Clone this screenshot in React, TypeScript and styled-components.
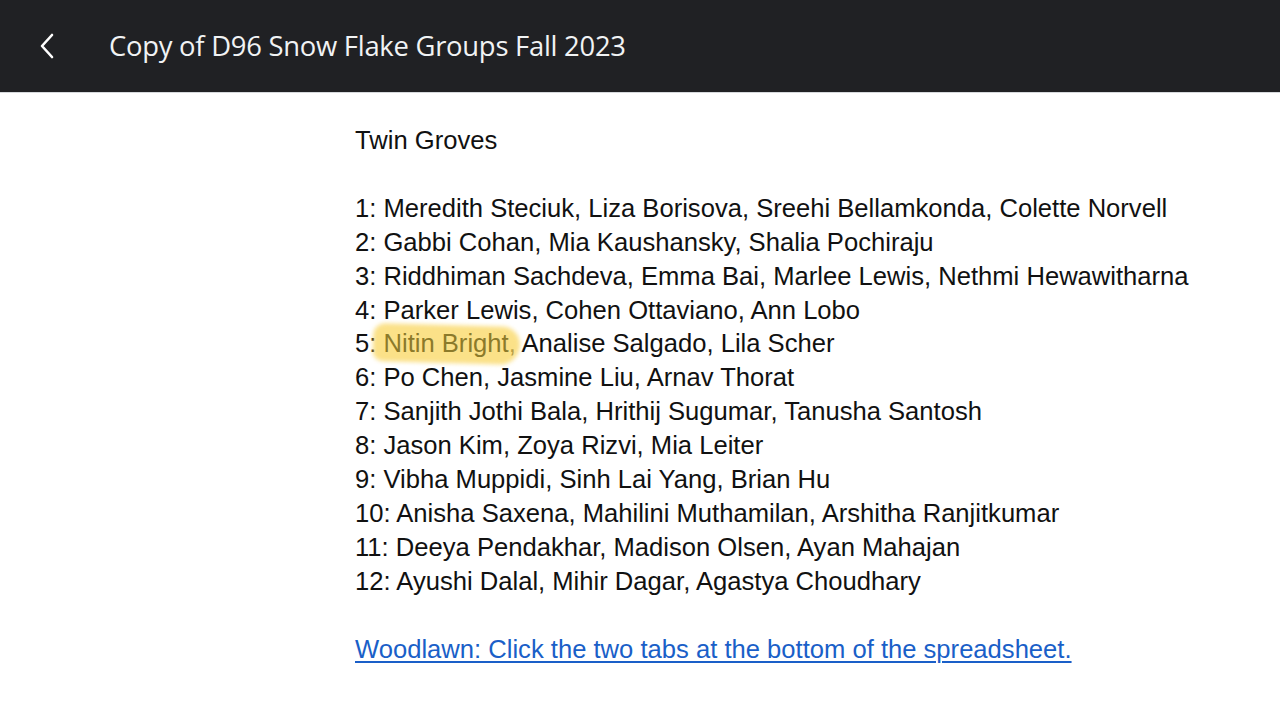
import React from "react";
import styled, { createGlobalStyle } from "styled-components";

const Global = createGlobalStyle`
  html, body { margin: 0; padding: 0; background: #ffffff; }
  body { font-family: "Liberation Sans", Arial, sans-serif; }
`;

const Page = styled.div`
  width: 1280px;
  height: 706px;
  overflow: hidden;
  background: #ffffff;
  display: flex;
  flex-direction: column;
`;

const TopBar = styled.header`
  height: 92px;
  flex: none;
  background: #202124;
  border-bottom: 1px solid #d6d9dc;
  display: flex;
  align-items: center;
  padding-left: 34px;
  gap: 49px;
`;

const BackButton = styled.button`
  width: 26px;
  height: 30px;
  padding: 0;
  border: 0;
  background: transparent;
  display: flex;
  align-items: center;
  justify-content: center;
  color: #ffffff;
`;

const Title = styled.h1`
  margin: 0;
  font-family: "Open Sans", "Noto Sans", sans-serif;
  font-weight: 400;
  font-size: 27.4px;
  letter-spacing: -0.25px;
  color: #f1f3f4;
  padding-bottom: 2px;
`;

const Content = styled.main`
  padding: 31px 0 0 355px;
  font-family: "Liberation Sans", Arial, sans-serif;
  font-size: 25.6px;
  line-height: 33.9px;
  color: #111111;
`;

const Line = styled.div`
  white-space: nowrap;
`;

const Blank = styled.div`
  height: 33.9px;
`;

const HighlightWrap = styled.span`
  position: relative;
  z-index: 0;
`;

const Highlight = styled.span`
  position: relative;
  color: #8c7a2a;
  &::before {
    content: "";
    position: absolute;
    left: -10px;
    right: -12px;
    top: -4px;
    bottom: -6px;
    background: rgba(250, 214, 90, 0.72);
    border-radius: 12px 18px 20px 10px;
    transform: rotate(1.6deg);
    filter: blur(2px);
    z-index: -1;
  }
`;

const Link = styled.a`
  color: #1a5fc8;
  text-decoration: underline;
  text-underline-offset: 3px;
  text-decoration-thickness: 1.5px;
`;

const groups: string[] = [
  "1: Meredith Steciuk, Liza Borisova, Sreehi Bellamkonda, Colette Norvell",
  "2: Gabbi Cohan, Mia Kaushansky, Shalia Pochiraju",
  "3: Riddhiman Sachdeva, Emma Bai, Marlee Lewis, Nethmi Hewawitharna",
  "4: Parker Lewis, Cohen Ottaviano, Ann Lobo",
  "5",
  "6: Po Chen, Jasmine Liu, Arnav Thorat",
  "7: Sanjith Jothi Bala, Hrithij Sugumar, Tanusha Santosh",
  "8: Jason Kim, Zoya Rizvi, Mia Leiter",
  "9: Vibha Muppidi, Sinh Lai Yang, Brian Hu",
  "10: Anisha Saxena, Mahilini Muthamilan, Arshitha Ranjitkumar",
  "11: Deeya Pendakhar, Madison Olsen, Ayan Mahajan",
  "12: Ayushi Dalal, Mihir Dagar, Agastya Choudhary",
];

export default function App() {
  return (
    <Page>
      <Global />
      <TopBar>
        <BackButton aria-label="Back">
          <svg width="18" height="26" viewBox="0 0 18 26" fill="none">
            <path d="M14 2 L4 13 L14 24" stroke="#ffffff" strokeWidth="2.6" strokeLinecap="round" strokeLinejoin="round" />
          </svg>
        </BackButton>
        <Title>Copy of D96 Snow Flake Groups Fall 2023</Title>
      </TopBar>
      <Content>
        <Line>Twin Groves</Line>
        <Blank />
        {groups.map((g) =>
          g === "5" ? (
            <Line key={g}>
              5:{" "}
              <HighlightWrap>
                <Highlight>Nitin Bright</Highlight>
              </HighlightWrap>
              , Analise Salgado, Lila Scher
            </Line>
          ) : (
            <Line key={g}>{g}</Line>
          )
        )}
        <Blank />
        <Line>
          <Link href="#">Woodlawn: Click the two tabs at the bottom of the spreadsheet.</Link>
        </Line>
      </Content>
    </Page>
  );
}
